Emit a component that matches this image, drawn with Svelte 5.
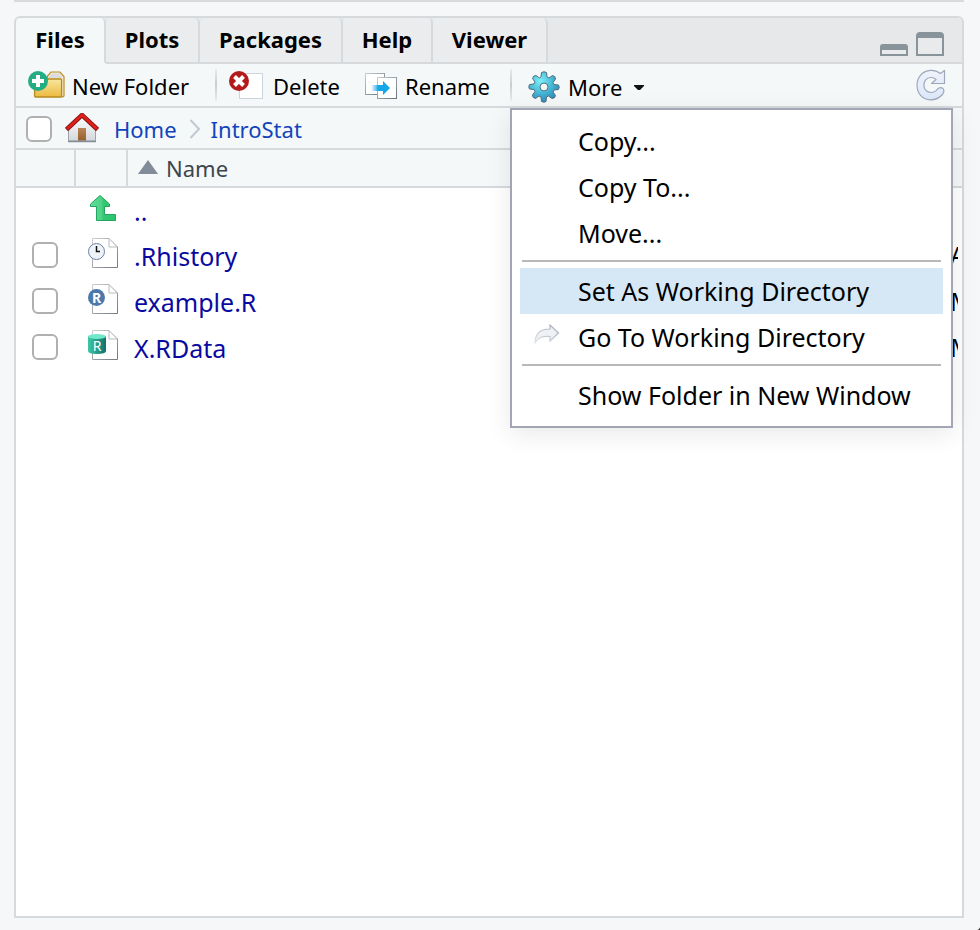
<script>
  const tabs = [
    { name: 'Files', width: 88 },
    { name: 'Plots', width: 92 },
    { name: 'Packages', width: 141 },
    { name: 'Help', width: 88 },
    { name: 'Viewer', width: 113 }
  ];
  const files = [
    { name: '.Rhistory', kind: 'history', modified: 'Apr' },
    { name: 'example.R', kind: 'script', modified: 'May' },
    { name: 'X.RData', kind: 'data', modified: 'May' }
  ];
  const menu = [
    ['Copy...', 'Copy To...', 'Move...'],
    ['Set As Working Directory', 'Go To Working Directory'],
    ['Show Folder in New Window']
  ];
  let active = $state('Files');
  let hot = $state('Set As Working Directory');
  let all = $state(false);
</script>

<main>
  <div class="upper"></div>
  <section class="pane">
    <header class="strip">
      <div class="tabs" role="tablist">
        {#each tabs as t}
          <button class="tab" class:on={active === t.name} role="tab" aria-selected={active === t.name}
            style="min-width:{t.width}px" onclick={() => (active = t.name)}>{t.name}</button>
        {/each}
      </div>
      <div class="sizers">
        <button class="plain" aria-label="Minimize">
          <svg width="28" height="24" viewBox="0 0 28 24"><path d="M0 24V15q0-3 3-3H25q3 0 3 3V24Z" fill="#89939a"/><path d="M2 18H26V22H2Z" fill="#e8eaeb"/></svg>
        </button>
        <button class="plain" aria-label="Maximize">
          <svg width="28" height="24" viewBox="0 0 28 24"><path d="M0 24V4q0-4 4-4H24q4 0 4 4V24Z" fill="#89939a"/><path d="M2 6H26V22H2Z" fill="#e8eaeb"/></svg>
        </button>
      </div>
    </header>

    <div class="toolbar">
      <button class="tool new">
        <svg width="38" height="30" viewBox="0 0 38 30">
          <defs>
            <linearGradient id="fold" x1="0" y1="0" x2="0" y2="1"><stop offset="0" stop-color="#f8e7a0"/><stop offset="1" stop-color="#ecb93f"/></linearGradient>
          </defs>
          <path d="M19.500 8V6L23 2H32L36 6.500V25.500Q36 27 33.500 27Z" fill="#f5ead0" stroke="#b98f2a" stroke-width="1.200"/>
          <path d="M21 8V6.500L24 3.500H31L34 7V8Z" fill="#dcdcdc"/>
          <rect x="6.600" y="9" width="27" height="18" rx="1" fill="url(#fold)" stroke="#b68a1d" stroke-width="1.300"/>
          <circle cx="10" cy="11" r="10" fill="#24ac82"/>
          <path d="M10 5V17M4 11H16" stroke="#fff" stroke-width="4"/>
        </svg>
        New Folder
      </button>
      <span class="rule"></span>
      <button class="tool del">
        <svg width="34" height="30" viewBox="0 0 34 30">
          <rect x="10.500" y="3.500" width="23" height="25" fill="#fff" stroke="#ccd4de"/>
          <circle cx="10" cy="11" r="10" fill="#b31b1b"/>
          <path d="M5.500 6.500L14.500 15.500M14.500 6.500L5.500 15.500" stroke="#fff" stroke-width="4"/>
        </svg>
        Delete
      </button>
      <button class="tool ren">
        <svg width="32" height="30" viewBox="0 0 32 30">
          <defs>
            <linearGradient id="ar" x1="0" x2="1"><stop offset="0" stop-color="#18a7e6" stop-opacity="0"/><stop offset=".4" stop-color="#18a7e6"/></linearGradient>
            <linearGradient id="edge" x1="0" y1="0" x2="1" y2="1"><stop offset="0" stop-color="#c5ccd2"/><stop offset="1" stop-color="#68727a"/></linearGradient>
          </defs>
          <rect x=".5" y="3.500" width="19" height="21" fill="#fff" stroke="url(#edge)"/>
          <rect x="12.500" y="7.500" width="19" height="21" fill="#fff" stroke="url(#edge)"/>
          <path d="M6 15H18V11L25 18L18 25V21H6Z" fill="url(#ar)"/>
        </svg>
        Rename
      </button>
      <span class="rule"></span>
      <button class="tool more" aria-haspopup="menu" aria-expanded="true">
        <svg width="32" height="32" viewBox="0 0 32 32">
          <defs><radialGradient id="gear" cx=".38" cy=".3" r=".75"><stop offset="0" stop-color="#7df0f8"/><stop offset=".55" stop-color="#45b5d5"/><stop offset="1" stop-color="#2c86b4"/></radialGradient></defs>
          <path d="M13.500 1.500Q16 0 18.500 1.500L19 6L21 7L24.500 4.500Q27.500 5 27.500 8L25 11.500L26 13.500L30.500 14Q32 16 30.500 18.500L26 19L25 21L27.500 24.500Q27 27.500 24 27.500L20.500 25L18.500 26L18 30.500Q16 32 13.500 30.500L13 26L11 25L7.500 27.500Q4.500 27 4.500 24L7 20.500L6 18.500L1.500 18Q0 16 1.500 13.500L6 13L7 11L4.500 7.500Q5 4.500 8 4.500L11.500 7L13 6Z" fill="url(#gear)" stroke="#52707f" stroke-width="1"/>
          <circle cx="16" cy="16" r="4" fill="#f1f6f7" stroke="#52707f"/>
        </svg>
        More
        <svg class="caret" width="10" height="6" viewBox="0 0 10 6"><path d="M0 0H10V1L6 5H4L0 1Z" fill="#111"/></svg>
      </button>
      <button class="plain refresh" aria-label="Refresh">
        <svg width="30" height="32" viewBox="0 0 30 32">
          <defs><linearGradient id="rf" x1="0" y1="0" x2="0" y2="1"><stop offset="0" stop-color="#eef3fb"/><stop offset="1" stop-color="#dce7fa"/></linearGradient></defs>
          <path d="M28.500 1.500V14.500H15.500L20 10.500Q18 8.500 15 8.500C5.500 8.500 5.500 23.500 15 23.500Q19 23.500 21.500 20Q24 17.500 27 19.500Q29 22 26.500 25.500C23 29.500 19 30.800 14.500 30.800C-3.500 30 -3.500 2.500 14.500 1.300Q20 1 24.500 4.500Z" fill="url(#rf)" stroke="#a0a8b8" stroke-width="1.200" stroke-linejoin="round"/>
        </svg>
      </button>

      <div class="menu" role="menu">
        {#each menu as group, i}
          {#if i > 0}<hr />{/if}
          {#each group as item}
            <button class="item" class:hot={hot === item} role="menuitem" onmouseenter={() => (hot = item)}>
              <span class="glyph">
                {#if item === 'Go To Working Directory'}
                  <svg width="26" height="26" viewBox="0 0 26 26">
                    <defs><linearGradient id="go" x1="0" y1="1" x2="1" y2="0"><stop offset="0" stop-color="#a9b0ba" stop-opacity=".3"/><stop offset="1" stop-color="#a2a9b6"/></linearGradient></defs>
                    <path d="M1 19C1 9 6 5 16 5V1L24.500 9L16 17V12.500C9 12 5 13 1 19Z" fill="#eff1f4" stroke="url(#go)" stroke-width="1.200"/>
                  </svg>
                {/if}
              </span>
              {item}
            </button>
          {/each}
        {/each}
      </div>
    </div>

    <nav class="path">
      <input type="checkbox" aria-label="Select all files" bind:checked={all} />
      <svg class="house" width="34" height="32" viewBox="0 0 34 32">
        <defs>
          <linearGradient id="wall" x1="0" y1="0" x2="0" y2="1"><stop offset="0" stop-color="#fff"/><stop offset="1" stop-color="#d3d6db"/></linearGradient>
          <linearGradient id="door" x1="0" y1="0" x2="0" y2="1"><stop offset="0" stop-color="#b98556"/><stop offset="1" stop-color="#94602f"/></linearGradient>
        </defs>
        <path d="M3.500 14L17 3L30.500 14V28H3.500Z" fill="url(#wall)" stroke="#9aa3ab"/>
        <path d="M3 28.500H31" stroke="#848e96" stroke-width="1.500"/>
        <rect x="13" y="15" width="8" height="12.500" fill="url(#door)"/>
        <path d="M1.500 16.500L17 2L32.500 16.500" fill="none" stroke="#7e1010" stroke-width="4.500"/>
        <path d="M2 16L17 2L32 16" fill="none" stroke="#e02018" stroke-width="2.800"/>
      </svg>
      <a href="#home">Home</a>
      <svg class="chev" width="12" height="20" viewBox="0 0 12 20"><path d="M1.500 1L10 10L1.500 19" fill="none" stroke="#c3c8d2" stroke-width="2"/></svg>
      <a href="#introstat">IntroStat</a>
    </nav>

    <table>
      <colgroup><col class="c1" /><col class="c2" /><col /><col class="c4" /></colgroup>
      <thead>
        <tr>
          <th aria-label="Selected"></th>
          <th aria-label="Type"></th>
          <th class="name"><span class="sort"><svg width="20" height="14" viewBox="0 0 20 14"><path d="M10 0L20 14H0Z" fill="#828b98"/></svg>Name</span></th>
          <th aria-label="Modified"></th>
        </tr>
      </thead>
      <tbody>
        <tr class="up">
          <td></td>
          <td class="icon">
            <svg width="30" height="30" viewBox="0 0 30 30">
              <defs><linearGradient id="upg" x1="0" x2="1"><stop offset="0" stop-color="#62dd97"/><stop offset=".45" stop-color="#4cd287"/><stop offset=".5" stop-color="#34c775"/><stop offset="1" stop-color="#2bc36e"/></linearGradient></defs>
              <path d="M12 2.500L21.500 11V13.500H16.500V21.500H27.500V27.500H8.500V13.500H2.500V11Z" fill="url(#upg)" stroke="#21a55f"/>
            </svg>
          </td>
          <td class="label"><a href="#up">..</a></td>
          <td></td>
        </tr>
        {#each files as f}
          <tr>
            <td class="tick"><input type="checkbox" checked={all} aria-label={f.name} /></td>
            <td class="icon">
              <svg width="30" height="30" viewBox="0 0 30 30">
                <defs>
                  <linearGradient id="pg-{f.kind}" x1="0" y1="0" x2="1" y2="1"><stop offset="0" stop-color="#cdd0d3"/><stop offset="1" stop-color="#727980"/></linearGradient>
                  <linearGradient id="cyl" x1="0" x2="1"><stop offset="0" stop-color="#3cc9a7"/><stop offset="1" stop-color="#12706a"/></linearGradient>
                </defs>
                <path d="M4.500 .5H21L29.500 9V29.500H4.500Z" fill="#fff" stroke="url(#pg-{f.kind})"/>
                <path d="M21 .5V9H29.500" fill="none" stroke="#b7bbbf"/>
                {#if f.kind === 'history'}
                  <circle cx="8.500" cy="13.500" r="8" fill="#eef3fa" stroke="#6d819b"/>
                  <path d="M8.500 8V13.500H12" fill="none" stroke="#111" stroke-width="1.500"/>
                {:else if f.kind === 'script'}
                  <circle cx="8.500" cy="13.500" r="8.500" fill="#4d78ab"/>
                  <text x="8.500" y="18.500" text-anchor="middle" class="r bold">R</text>
                {:else}
                  <path d="M0 6V21Q0 24 9 24T18 21V6Z" fill="url(#cyl)"/>
                  <ellipse cx="9" cy="6.500" rx="9" ry="2.500" fill="#72e8cb"/>
                  <text x="9" y="21" text-anchor="middle" class="r">R</text>
                {/if}
              </svg>
            </td>
            <td class="label"><a href="#{f.name}">{f.name}</a></td>
            <td><div class="date">{f.modified}</div></td>
          </tr>
        {/each}
      </tbody>
    </table>
  </section>
</main>

<style>
  :global(body) { background: #f5f7f9; }
  main {
    box-sizing: border-box;
    min-height: 100vh;
    display: flex;
    flex-direction: column;
    padding: 0 16px 12px 14px;
    background: radial-gradient(circle at 0 0, transparent 12px, #444 13px) right bottom / 10px 10px no-repeat;
    font-family: "Noto Sans", "Open Sans", sans-serif;
    font-size: 22px;
    color: #000;
  }
  button { font: inherit; color: inherit; cursor: default; }
  svg { display: block; flex: none; }
  a { text-decoration: none; }
  .upper { height: 2px; margin-bottom: 14px; background: #d8dadc; }
  .pane {
    flex: 1;
    display: flex;
    flex-direction: column;
    border: 2px solid #d6dadd;
    border-radius: 6px 6px 0 0;
    background: #fff;
  }
  .strip {
    display: flex;
    justify-content: space-between;
    height: 46px;
    background: linear-gradient(#d6dadd, #d6dadd) bottom / 100% 2px no-repeat, #e6e8ea;
    border-radius: 4px 4px 0 0;
  }
  .tabs { display: flex; }
  .tab {
    box-sizing: content-box;
    height: 44px;
    padding: 0;
    border: 0;
    border-right: 2px solid #d6dadd;
    border-bottom: 2px solid #d6dadd;
    border-radius: 5px 5px 0 0;
    background: #ebecee;
    font-weight: 700;
    line-height: 42px;
    padding: 0 0 2px;
    height: 42px;
  }
  .tab.on { background: #f4f8f9; border-bottom-color: #f4f8f9; }
  .plain { padding: 0; border: 0; background: none; }
  .sizers { display: flex; gap: 8px; padding: 14px 18px 0 0; align-items: flex-start; }
  .toolbar {
    position: relative;
    display: flex;
    align-items: center;
    height: 42px;
    padding: 0 16px 0 12px;
    border-bottom: 2px solid #d6dadd;
    background: #f4f8f9;
  }
  .tool {
    display: flex;
    align-items: center;
    gap: 6px;
    padding: 2px 0 0;
    border: 0;
    background: none;
    white-space: nowrap;
  }
  .new { width: 187px; }
  .del { width: 136px; gap: 10px; }
  .ren { width: 145px; gap: 8px; }
  .rule { width: 2px; height: 32px; margin-right: 12px; background: linear-gradient(#e9ecee, #c9ccd0 50%, #e9ecee); }
  .new svg, .del svg, .ren svg { margin-bottom: 2px; }
  .more { gap: 8px; margin-left: 4px; padding-top: 4px; }
  .caret { margin: 2px 0 0 4px; }
  .refresh { margin-left: auto; }
  .menu {
    position: absolute;
    z-index: 2;
    top: 44px;
    right: 9px;
    box-sizing: border-box;
    width: 443px;
    padding: 8px;
    border: 2px solid #a2a5b3;
    background: #fff;
    box-shadow: 0 6px 24px rgba(0, 0, 0, .09);
    font-size: 25px;
  }
  .item {
    display: flex;
    align-items: center;
    width: 100%;
    height: 46px;
    padding: 0 0 0 14px;
    border: 0;
    background: none;
    white-space: nowrap;
  }
  .item.hot { background: #d6e8f6; }
  .glyph { width: 44px; flex: none; }
  hr { height: 2px; margin: 4px 2px 6px; border: 0; background: #b8b8b8; }
  .path {
    box-sizing: border-box;
    display: flex;
    align-items: center;
    height: 42px;
    padding: 2px 0 0 10px;
    border-bottom: 2px solid #d6dadd;
    background: #f4f8f9;
  }
  .path a { color: #1144bb; }
  .house { margin: 0 15px 0 13px; }
  .chev { margin: 0 10px 0 12px; }
  input {
    appearance: none;
    flex: none;
    display: block;
    box-sizing: border-box;
    width: 26px;
    height: 26px;
    margin: 0;
    border: 2px solid #b0b0b0;
    border-radius: 6px;
    background: #fff;
  }
  input:checked { background: #3b82f6; }
  table { width: 100%; table-layout: fixed; border-collapse: separate; border-spacing: 0; }
  .c1 { width: 60px; }
  .c2 { width: 52px; }
  .c4 { width: 12px; }
  th {
    height: 36px;
    padding: 0;
    border-bottom: 2px solid #d6dadd;
    background: #f4f8f9;
    color: #3c464d;
    font-weight: 400;
    line-height: 36px;
    text-align: left;
  }
  th:nth-child(-n + 2) { border-right: 2px solid #d6dadd; }
  .sort { display: flex; align-items: center; gap: 8px; padding-left: 10px; }
  .sort svg { margin-bottom: 2px; }
  td {
    box-sizing: border-box;
    height: 46px;
    padding: 0;
    vertical-align: middle;
    font-size: 25px;
    line-height: 44px;
  }
  .up td { height: 44px; line-height: 42px; }
  .tick { padding-left: 16px; }
  .icon svg { margin: 0 0 4px 12px; }
  .label { padding: 2px 0 0 6px; }
  .label a { color: #0a0aa0; }
  .date { margin-right: 4px; overflow: hidden; white-space: nowrap; }
  .r { fill: #fff; font-size: 14px; }
  .bold { font-weight: 700; }
</style>
